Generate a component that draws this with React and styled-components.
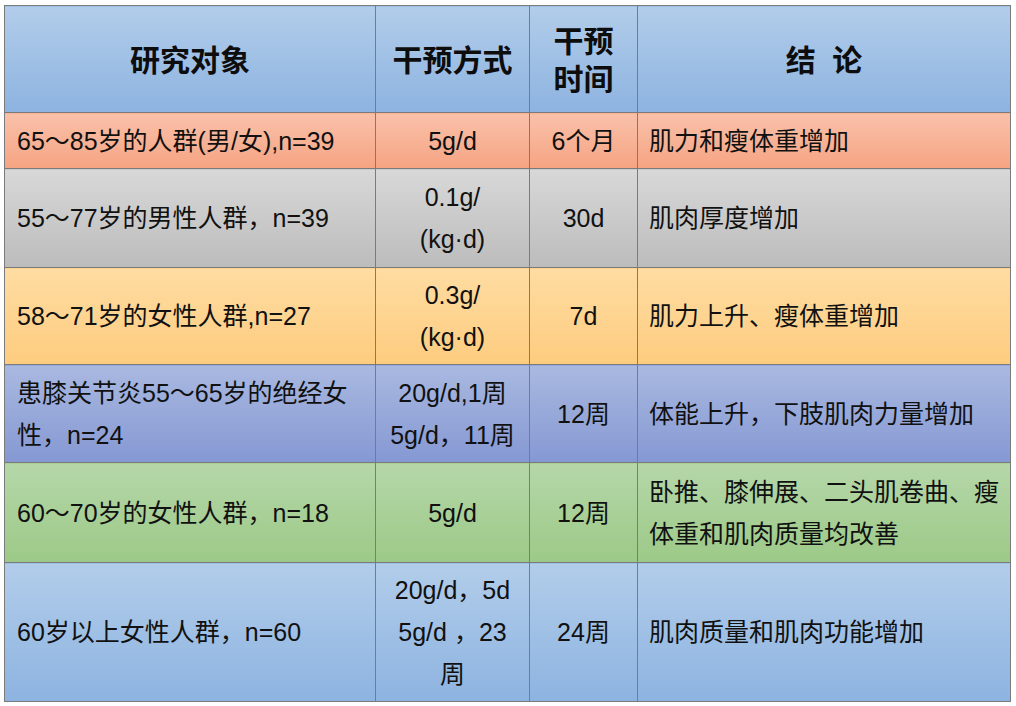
import React from 'react';
import styled, { createGlobalStyle } from 'styled-components';

const GlobalStyle = createGlobalStyle`
  html, body {
    margin: 0;
    padding: 0;
    background: #ffffff;
  }
  body {
    font-family: "Liberation Sans", "Noto Sans CJK SC", sans-serif;
    color: #111111;
  }
`;

// Row tones: top and bottom of each row's vertical gradient
const tones = {
  blue: ['#b2cdea', '#8db3e0'],
  salmon: ['#f9c1aa', '#f6a482'],
  grey: ['#d8d8d8', '#bcbcbc'],
  amber: ['#ffdca2', '#fdcc7f'],
  violet: ['#a9b9e1', '#8598d2'],
  green: ['#b5d7a9', '#9cc987']
};

const rows = [
  {
    tone: 'salmon',
    height: 56,
    subject: ['65～85岁的人群(男/女),n=39'],
    method: ['5g/d'],
    time: '6个月',
    result: ['肌力和瘦体重增加']
  },
  {
    tone: 'grey',
    height: 99,
    subject: ['55～77岁的男性人群，n=39'],
    method: ['0.1g/', '(kg·d)'],
    time: '30d',
    result: ['肌肉厚度增加']
  },
  {
    tone: 'amber',
    height: 97,
    subject: ['58～71岁的女性人群,n=27'],
    method: ['0.3g/', '(kg·d)'],
    time: '7d',
    result: ['肌力上升、瘦体重增加']
  },
  {
    tone: 'violet',
    height: 98,
    subject: ['患膝关节炎55～65岁的绝经女', '性，n=24'],
    method: ['20g/d,1周', '5g/d，11周'],
    time: '12周',
    result: ['体能上升，下肢肌肉力量增加']
  },
  {
    tone: 'green',
    height: 100,
    subject: ['60～70岁的女性人群，n=18'],
    method: ['5g/d'],
    time: '12周',
    result: ['卧推、膝伸展、二头肌卷曲、瘦', '体重和肌肉质量均改善']
  },
  {
    tone: 'blue',
    height: 139,
    subject: ['60岁以上女性人群，n=60'],
    method: ['20g/d，5d', '5g/d ，23', '周'],
    time: '24周',
    result: ['肌肉质量和肌肉功能增加']
  }
];

const Lines = ({ items }) =>
  items.map((line, i) => (
    <React.Fragment key={i}>
      {i > 0 && <br />}
      {line}
    </React.Fragment>
  ));

const App = () => (
  <>
    <GlobalStyle />
    <Page>
      <Table>
        <colgroup>
          <col style={{ width: 371 }} />
          <col style={{ width: 154 }} />
          <col style={{ width: 108 }} />
          <col style={{ width: 373 }} />
        </colgroup>
        <thead>
          <Row $tone="blue" $height={107}>
            <HeadCell>研究对象</HeadCell>
            <HeadCell>干预方式</HeadCell>
            <HeadCell>
              干预
              <br />
              时间
            </HeadCell>
            <HeadCell>结&nbsp;&nbsp;论</HeadCell>
          </Row>
        </thead>
        <tbody>
          {rows.map((row, i) => (
            <Row key={`row-${i}`} $tone={row.tone} $height={row.height}>
              <Cell>
                <Lines items={row.subject} />
              </Cell>
              <Cell $center>
                <Lines items={row.method} />
              </Cell>
              <Cell $center>{row.time}</Cell>
              <Cell $result>
                <Lines items={row.result} />
              </Cell>
            </Row>
          ))}
        </tbody>
      </Table>
    </Page>
  </>
);

const Page = styled.div`
  padding: 5px 0 0 4px;
`;

const Table = styled.table`
  border-collapse: collapse;
  table-layout: fixed;
  width: 1007px;
`;

const Row = styled.tr`
  height: ${(p) => p.$height}px;

  & > td,
  & > th {
    background: linear-gradient(
      to bottom,
      ${(p) => tones[p.$tone][0]},
      ${(p) => tones[p.$tone][1]}
    );
  }
`;

const HeadCell = styled.th`
  border: 1px solid #7b7b7b;
  padding: 4px 0 0;
  text-align: center;
  vertical-align: middle;
  font-size: 30px;
  font-weight: 700;
  line-height: 38px;
  color: #0d0d0d;
`;

const Cell = styled.td`
  border: 1px solid #7b7b7b;
  padding: ${(p) => (p.$result ? '0 8px 0 11px' : p.$center ? '0 4px' : '0 4px 0 12px')};
  text-align: ${(p) => (p.$center ? 'center' : 'left')};
  vertical-align: middle;
  font-size: 25px;
  line-height: 42px;
  white-space: nowrap;
`;

export default App;
